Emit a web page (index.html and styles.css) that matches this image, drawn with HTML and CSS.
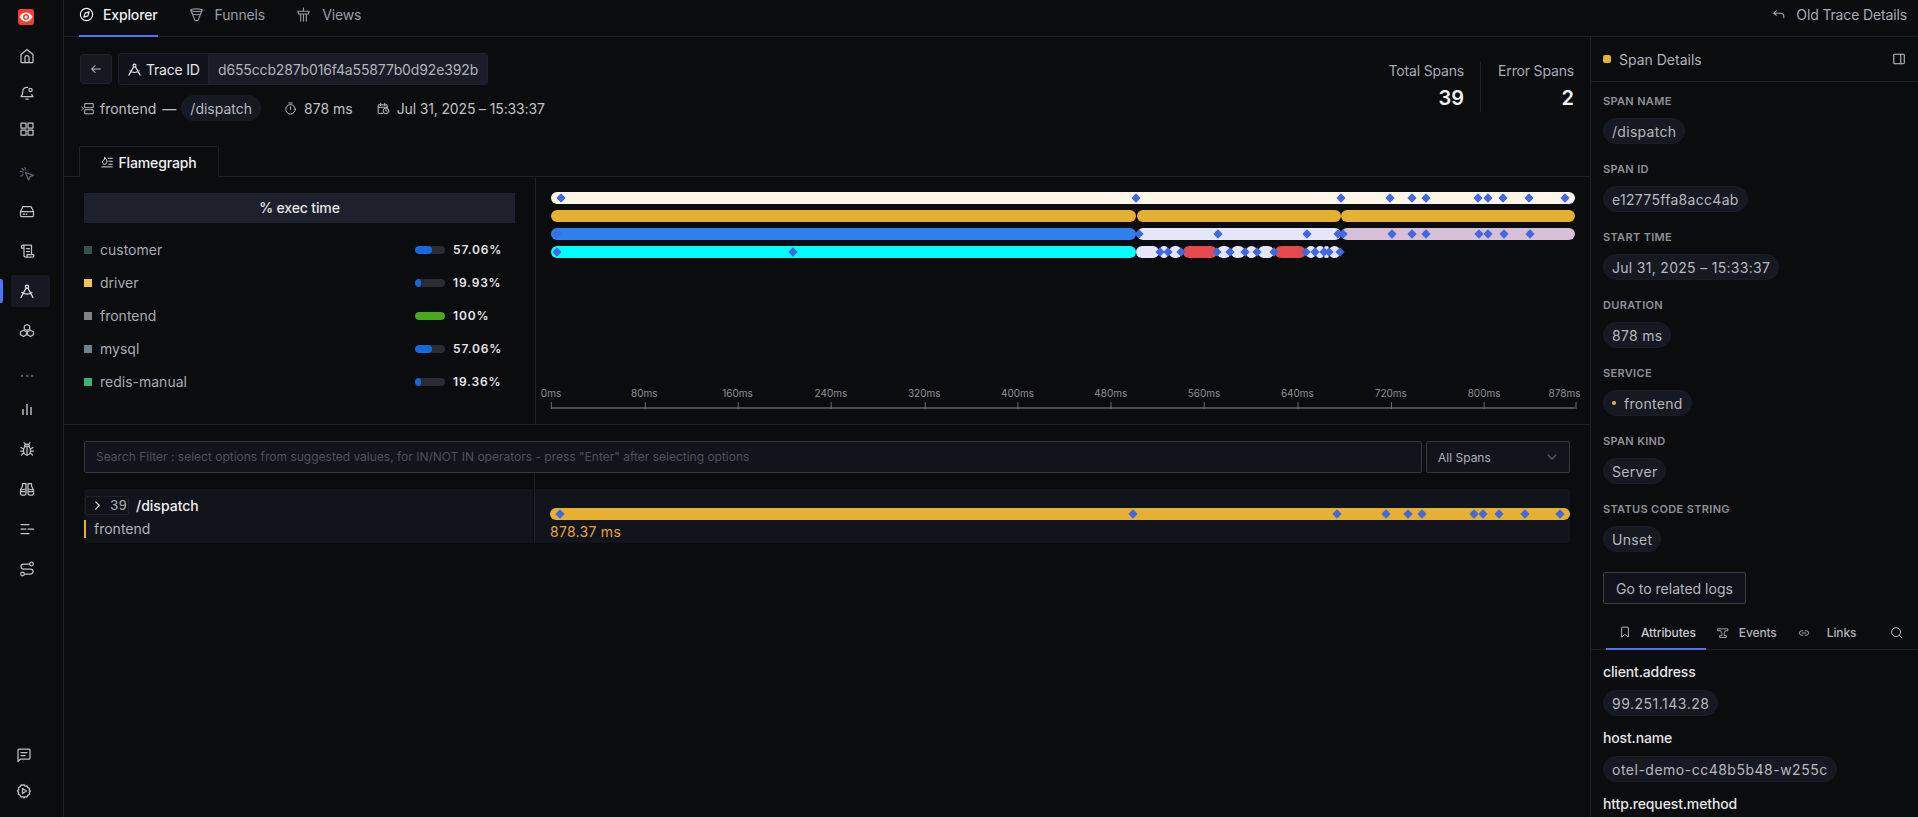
FILE: index.html
```html
<!DOCTYPE html>
<html lang="en">
<head>
    <meta charset="UTF-8">
    <title>Trace Details</title>
    <link rel="stylesheet" href="styles.css">
</head>
<body>
<svg class="defs" aria-hidden="true">
    <symbol id="d" viewBox=".3 .3 7.400 7.400" overflow="visible"><path d="M4 .6 7.400 4 4 7.400 .6 4Z" fill="#4169e1" stroke="#4169e1" stroke-width="1.300" stroke-linejoin="round"/></symbol>
</svg>
<div class="app">
    <!-- Sidebar -->
    <aside class="sidebar">
        <div class="logo"><svg width="16" height="16" viewBox="0 0 16 16"><path d="M1.500 8C3.500 4.800 5.600 3.600 8 3.600s4.500 1.200 6.500 4.400C12.500 11.200 10.400 12.400 8 12.400S3.500 11.200 1.500 8Z" fill="#fff" stroke="none"/><circle cx="8" cy="8" r="3" fill="#f0402e" stroke="none"/><circle cx="8" cy="8" r="1.500" fill="#fff" stroke="none"/></svg></div>
        <a class="side-item tight home"><svg viewBox="0 0 16 16"><path d="M2 14V6.500L8 1.500l6 5V14a.5.5 0 0 1-.5.500H2.500A.5.5 0 0 1 2 14Z"/><path d="M6 14.500V9.500a2 2 0 0 1 4 0v5"/></svg></a>
        <a class="side-item tight"><svg viewBox="0 0 16 16"><path d="M8.500 2.400A4 4 0 0 0 3.800 6.500c0 3.500-1.800 5-1.800 5h12s-.8-.7-1.300-2"/><path d="M6.800 14h2.400"/><circle cx="11.500" cy="5" r="1.700"/></svg></a>
        <a class="side-item tight"><svg viewBox="0 0 16 16"><rect x="2" y="2" width="5" height="5"/><rect x="9" y="2" width="5" height="5"/><rect x="2" y="9" width="5" height="5"/><rect x="9" y="9" width="5" height="5"/></svg></a>
        <a class="side-item dim cursor"><svg viewBox="0 0 16 16"><path d="M6.500 6.500l8 2.800-3.400 1.400-1.400 3.500Z"/><path d="M6 1.500 6.500 4M1.500 5.500 4 6M3 2.500l1.500 1.500M2 10l2-1.500"/></svg></a>
        <a class="side-item"><svg viewBox="0 0 16 16"><path d="M1.500 8.500v4a1 1 0 0 0 1 1h11a1 1 0 0 0 1-1v-4M1.500 8.500 4 3.500h8l2.500 5ZM1.500 8.500h13"/><path d="M4 11h1.500M7 11h1"/></svg></a>
        <a class="side-item"><svg viewBox="0 0 16 16"><path d="M4 2h8.500v9.500M4 2a1.500 1.500 0 0 0-1.500 1.500V5H5V3.500A1.500 1.500 0 0 0 4 2ZM5 4v8.500A1.500 1.500 0 0 0 6.500 14h7a1.500 1.500 0 0 0 1-2.500H8v1.500"/><path d="M7.500 5.500h3M7.500 8.500h3"/></svg></a>
        <a class="side-item active"><svg viewBox="0 0 16 16"><circle cx="8" cy="3.800" r="1.600"/><path d="M7 5.200 2 14.500M9 5.200l5 9.300M3 9.500c3 2 7 2 10 0"/></svg></a>
        <a class="side-item"><svg viewBox="0 0 16 16"><path d="M8 1.500l2.700 1.500v3L8 7.500 5.300 6V3Z"/><path d="M4.500 7.200 7.500 8.700v3L4.500 13.500 1.500 11.700v-3Z"/><path d="M11.500 7.200 14.500 8.700v3l-3 1.800-3-1.800v-3Z"/></svg></a>
        <div class="side-dots">•••</div>
        <a class="side-item small"><svg viewBox="0 0 16 16"><rect x="3" y="8" width="2" height="6" fill="currentColor" stroke="none"/><rect x="7" y="3" width="2" height="11" fill="currentColor" stroke="none"/><rect x="11" y="6" width="2" height="8" fill="currentColor" stroke="none"/></svg></a>
        <a class="side-item"><svg viewBox="0 0 16 16"><ellipse cx="8" cy="9.500" rx="3.500" ry="4.500"/><path d="M8 5v9M5.500 5.500a2.500 2.500 0 0 1 5 0M4.500 8 2 6.500M11.500 8 14 6.500M4.500 10H1.500M11.500 10h3M4.800 12 2.500 14M11.200 12l2.300 2M6 3 5 1.500M10 3l1-1.500"/></svg></a>
        <a class="side-item"><svg viewBox="0 0 16 16"><path d="M1.500 9 3.500 5V2.500H7v5.500M1.500 9v3.500A1.500 1.500 0 0 0 3 14h2.500A1.500 1.500 0 0 0 7 12.500V8ZM14.500 9 12.500 5V2.500H9v5.500M14.500 9v3.500A1.500 1.500 0 0 1 13 14h-2.500A1.500 1.500 0 0 1 9 12.500V8ZM1.500 10.500H7M9 10.500h5.500"/></svg></a>
        <a class="side-item"><svg viewBox="0 0 16 16"><path d="M2 3.500h8M2 8h5M9 8h5.500M2 12.500h8"/></svg></a>
        <a class="side-item"><svg viewBox="0 0 16 16"><circle cx="12.500" cy="3" r="1.800"/><circle cx="3.500" cy="13" r="1.800"/><path d="M10.700 3H4.500a2.500 2.500 0 0 0 0 5h7a2.500 2.500 0 0 1 0 5H5.300"/></svg></a>
        <div class="side-bottom">
            <a class="side-item"><svg viewBox="0 0 16 16"><path d="M2 14.500V3a1 1 0 0 1 1-1h10a1 1 0 0 1 1 1v8a1 1 0 0 1-1 1H4.500Z"/><path d="M5 5.500h6M5 8.500h4"/></svg></a>
            <a class="side-item"><svg viewBox="0 0 16 16"><path d="M8 1.500l1 1.700 2-.4.700 1.900 1.900.7-.4 2L14.500 8l-1.300 1.500.4 2-1.900.7-.7 1.900-2-.4-1 1.300-1-1.300-2 .4-.7-1.900-1.900-.7.4-2L1.500 8l1.300-1.500-.4-2 1.900-.7.7-1.900 2 .4Z"/><path d="M6.500 5.500v5L10.500 8Z"/></svg></a>
        </div>
    </aside>

    <div class="content">
        <!-- Top tabs -->
        <nav class="topbar">
            <a class="top-tab selected"><svg viewBox="0 0 16 16"><circle cx="8" cy="8" r="6.500"/><path d="M10.800 5.200 9.500 9.500 5.200 10.800 6.500 6.500Z"/></svg>Explorer</a>
            <a class="top-tab"><svg viewBox="0 0 16 16"><path d="M2 3.500c0-2 12-2 12 0L9.500 14.500h-3Z"/><path d="M2 3.500c0 1.800 12 1.800 12 0M3.500 7.500c2.500.8 6.500.8 9 0"/></svg>Funnels</a>
            <a class="top-tab"><svg viewBox="0 0 16 16"><path d="M2 4.500h12l-1 3H3ZM8 1v3.500M5 7.500V15M11 7.500V15M8 7.500V15"/></svg>Views</a>
            <a class="old-link"><svg viewBox="0 0 16 16"><path d="M5 3 2 6l3 2.500M2 6h7.500a4 4 0 0 1 4 4v1"/></svg>Old Trace Details</a>
        </nav>

        <div class="columns">
            <main class="main">
                <section class="trace-head">
                    <div>
                        <div class="trace-id-row">
                            <button class="back-btn"><svg viewBox="0 0 16 16"><path d="M13 8H3M7 4 3 8l4 4"/></svg></button>
                            <div class="trace-id">
                                <span class="trace-id-label"><svg viewBox="0 0 16 16"><circle cx="8" cy="3.800" r="1.600"/><path d="M7 5.200 2 14M9 5.200l5 8.800M3 9.500c3 2 7 2 10 0"/></svg>Trace ID</span>
                                <span class="trace-id-value">d655ccb287b016f4a55877b0d92e392b</span>
                            </div>
                        </div>
                        <div class="trace-meta">
                            <span class="meta-service"><svg viewBox="0 0 16 16"><rect x="5" y="2" width="10" height="5"/><rect x="5" y="9.500" width="10" height="5"/><path d="M.8 6l2 2-2 2"/></svg>frontend</span>
                            <span class="meta-dash">—</span>
                            <span class="pill meta-pill">/dispatch</span>
                            <span class="meta-item duration"><svg viewBox="0 0 16 16"><circle cx="8" cy="9" r="5.800"/><path d="M6 1.200h4M8 9V6"/></svg>878 ms</span>
                            <span class="meta-item date"><svg viewBox="0 0 16 16"><path d="M7 14H2.500a1 1 0 0 1-1-1V3.500h11V7M1.500 6.500h11M4.500 1.500v3M9.500 1.500v3"/><circle cx="11" cy="11" r="3.500"/><path d="M11 9.500V11h1.200"/></svg>Jul 31, 2025 – 15:33:37</span>
                        </div>
                    </div>
                    <div class="totals">
                        <div class="total-col first">
                            <div class="total-label">Total Spans</div>
                            <div class="total-value">39</div>
                        </div>
                        <div class="total-col">
                            <div class="total-label">Error Spans</div>
                            <div class="total-value">2</div>
                        </div>
                    </div>
                </section>

                <div class="tabs-line">
                    <a class="flame-tab"><svg viewBox="0 0 16 16"><path d="M1 14.500h14M9.500 3H15M10.500 7H15M10.500 11H15M5 2c.5 2 3 2.500 3 5.500 0 2-1.300 3.500-3 3.500s-3.500-1.500-3-3.500C2.300 6 3 6 3.500 6 4.500 5 5 3.500 5 2Z"/></svg>Flamegraph</a>
                </div>

                <section class="flame">
                    <div class="exec">
                        <div class="exec-title">% exec time</div>
                        <div class="exec-row"><i class="swatch sw-customer"></i><span class="exec-name">customer</span><span class="exec-bar"><b class="fill-blue" style="width:57.06%"></b></span><span class="exec-pct">57.06%</span></div>
                        <div class="exec-row"><i class="swatch sw-driver"></i><span class="exec-name">driver</span><span class="exec-bar"><b class="fill-blue" style="width:19.93%"></b></span><span class="exec-pct">19.93%</span></div>
                        <div class="exec-row"><i class="swatch sw-frontend"></i><span class="exec-name">frontend</span><span class="exec-bar"><b class="fill-green" style="width:100%"></b></span><span class="exec-pct">100%</span></div>
                        <div class="exec-row"><i class="swatch sw-mysql"></i><span class="exec-name">mysql</span><span class="exec-bar"><b class="fill-blue" style="width:57.06%"></b></span><span class="exec-pct">57.06%</span></div>
                        <div class="exec-row"><i class="swatch sw-redis"></i><span class="exec-name">redis-manual</span><span class="exec-bar"><b class="fill-blue" style="width:19.36%"></b></span><span class="exec-pct">19.36%</span></div>
                    </div>
                    <div class="chart">
                        <svg class="flame-svg" width="1050" height="72" viewBox="540 186 1050 72">
                            <g fill="#fdf5e6"><rect x="551" y="192" width="1024" height="12" rx="6"/></g>
                            <g fill="#e6b032">
                                <rect x="551" y="210" width="585" height="12" rx="6"/>
                                <rect x="1137" y="210" width="204" height="12" rx="6"/>
                                <rect x="1341" y="210" width="234" height="12" rx="6"/>
                            </g>
                            <rect x="551" y="228" width="585" height="12" rx="6" fill="#2f80ed"/>
                            <rect x="1137" y="228" width="204" height="12" rx="6" fill="#e6e6fa"/>
                            <rect x="1341" y="228" width="234" height="12" rx="6" fill="#d8bfd8"/>
                            <rect x="551" y="246" width="585" height="12" rx="6" fill="#00ffff"/>
                            <g fill="#e6e6fa">
                                <rect x="1136" y="246" width="23" height="12" rx="6"/>
                                <rect x="1160" y="246" width="8" height="12" rx="4"/>
                                <rect x="1169" y="246" width="13" height="12" rx="6"/>
                                <rect x="1217" y="246" width="14" height="12" rx="6"/>
                                <rect x="1231" y="246" width="14" height="12" rx="6"/>
                                <rect x="1246" y="246" width="11" height="12" rx="5.500"/>
                                <rect x="1258" y="246" width="16" height="12" rx="6"/>
                                <rect x="1306" y="246" width="10" height="12" rx="5"/>
                                <rect x="1316" y="246" width="8" height="12" rx="4"/>
                                <rect x="1324" y="246" width="5" height="12" rx="2.500"/>
                                <rect x="1329" y="246" width="11" height="12" rx="5.500"/>
                            </g>
                            <g fill="#e5484d">
                                <rect x="1183" y="246" width="34" height="12" rx="6"/>
                                <rect x="1275" y="246" width="30.500" height="12" rx="6"/>
                            </g>
                            <use href="#d" x="557" y="194" width="8" height="8"/>
                            <use href="#d" x="1132" y="194" width="8" height="8"/>
                            <use href="#d" x="1337" y="194" width="8" height="8"/>
                            <use href="#d" x="1386" y="194" width="8" height="8"/>
                            <use href="#d" x="1408" y="194" width="8" height="8"/>
                            <use href="#d" x="1422" y="194" width="8" height="8"/>
                            <use href="#d" x="1474" y="194" width="8" height="8"/>
                            <use href="#d" x="1484" y="194" width="8" height="8"/>
                            <use href="#d" x="1499" y="194" width="8" height="8"/>
                            <use href="#d" x="1525" y="194" width="8" height="8"/>
                            <use href="#d" x="1561" y="194" width="8" height="8"/>
                            <use href="#d" x="553" y="230" width="8" height="8" opacity=".75"/>
                            <use href="#d" x="1135" y="230" width="8" height="8"/>
                            <use href="#d" x="1214" y="230" width="8" height="8"/>
                            <use href="#d" x="1303" y="230" width="8" height="8"/>
                            <use href="#d" x="1334" y="230" width="8" height="8"/>
                            <use href="#d" x="1339" y="230" width="8" height="8"/>
                            <use href="#d" x="1388" y="230" width="8" height="8"/>
                            <use href="#d" x="1408" y="230" width="8" height="8"/>
                            <use href="#d" x="1422" y="230" width="8" height="8"/>
                            <use href="#d" x="1475" y="230" width="8" height="8"/>
                            <use href="#d" x="1484" y="230" width="8" height="8"/>
                            <use href="#d" x="1500" y="230" width="8" height="8"/>
                            <use href="#d" x="1526" y="230" width="8" height="8"/>
                            <use href="#d" x="553" y="248" width="8" height="8"/>
                            <use href="#d" x="789" y="248" width="8" height="8"/>
                            <use href="#d" x="1156" y="248" width="8" height="8"/>
                            <use href="#d" x="1164" y="248" width="8" height="8"/>
                            <use href="#d" x="1177" y="248" width="8" height="8"/>
                            <use href="#d" x="1213" y="248" width="8" height="8"/>
                            <use href="#d" x="1226" y="248" width="8" height="8"/>
                            <use href="#d" x="1241" y="248" width="8" height="8"/>
                            <use href="#d" x="1253" y="248" width="8" height="8"/>
                            <use href="#d" x="1270" y="248" width="8" height="8"/>
                            <use href="#d" x="1302" y="248" width="8" height="8"/>
                            <use href="#d" x="1311" y="248" width="8" height="8"/>
                            <use href="#d" x="1320" y="248" width="8" height="8"/>
                            <use href="#d" x="1325" y="248" width="8" height="8"/>
                            <use href="#d" x="1336" y="248" width="8" height="8"/>
                        </svg>
                        <div class="axis">
                            <span class="tick" style="left:0">0ms</span>
                            <span class="tick" style="left:9.11%">80ms</span>
                            <span class="tick" style="left:18.22%">160ms</span>
                            <span class="tick" style="left:27.34%">240ms</span>
                            <span class="tick" style="left:36.45%">320ms</span>
                            <span class="tick" style="left:45.56%">400ms</span>
                            <span class="tick" style="left:54.67%">480ms</span>
                            <span class="tick" style="left:63.78%">560ms</span>
                            <span class="tick" style="left:72.89%">640ms</span>
                            <span class="tick" style="left:82.01%">720ms</span>
                            <span class="tick" style="left:91.12%">800ms</span>
                            <span class="tick last" style="left:100%">878ms</span>
                        </div>
                    </div>
                </section>

                <section class="waterfall">
                    <div class="filter-row">
                        <div class="search-box">Search Filter : select options from suggested values, for IN/NOT IN operators - press "Enter" after selecting options</div>
                        <div class="select-box">All Spans<svg viewBox="0 0 12 12"><path d="M2 4l4 4 4-4"/></svg></div>
                    </div>
                    <div class="span-row">
                        <div class="span-left">
                            <div class="span-top">
                                <span class="span-count"><svg viewBox="0 0 12 12"><path d="M4 2l4 4-4 4"/></svg>39</span>
                                <span class="span-name">/dispatch</span>
                            </div>
                            <div class="span-service">frontend</div>
                        </div>
                        <div class="span-right">
                            <svg class="span-svg" width="1020" height="12" viewBox="550 0 1020 12">
                                <rect x="550" y="0" width="1020" height="12" rx="6" fill="#e6b032"/>
                                <use href="#d" x="556" y="2" width="8" height="8"/>
                                <use href="#d" x="1129" y="2" width="8" height="8"/>
                                <use href="#d" x="1333" y="2" width="8" height="8"/>
                                <use href="#d" x="1382" y="2" width="8" height="8"/>
                                <use href="#d" x="1404" y="2" width="8" height="8"/>
                                <use href="#d" x="1418" y="2" width="8" height="8"/>
                                <use href="#d" x="1470" y="2" width="8" height="8"/>
                                <use href="#d" x="1479" y="2" width="8" height="8"/>
                                <use href="#d" x="1495" y="2" width="8" height="8"/>
                                <use href="#d" x="1521" y="2" width="8" height="8"/>
                                <use href="#d" x="1556" y="2" width="8" height="8"/>
                            </svg>
                            <div class="span-time">878.37 ms</div>
                        </div>
                    </div>
                </section>
            </main>

            <!-- Span details -->
            <aside class="details">
                <header class="details-head">
                    <i class="details-dot"></i><span>Span Details</span>
                    <svg viewBox="0 0 16 16"><rect x="2" y="2.500" width="12" height="11" rx="1"/><path d="M10 2.500v11"/></svg>
                </header>
                <div class="details-body">
                    <div class="field"><div class="field-label">SPAN NAME</div><span class="pill">/dispatch</span></div>
                    <div class="field"><div class="field-label">SPAN ID</div><span class="pill">e12775ffa8acc4ab</span></div>
                    <div class="field"><div class="field-label">START TIME</div><span class="pill">Jul 31, 2025 – 15:33:37</span></div>
                    <div class="field"><div class="field-label">DURATION</div><span class="pill">878 ms</span></div>
                    <div class="field"><div class="field-label">SERVICE</div><span class="pill"><i class="pill-dot"></i>frontend</span></div>
                    <div class="field"><div class="field-label">SPAN KIND</div><span class="pill">Server</span></div>
                    <div class="field"><div class="field-label">STATUS CODE STRING</div><span class="pill">Unset</span></div>
                    <button class="logs-btn">Go to related logs</button>
                </div>
                <div class="attr-tabs">
                    <a class="attr-tab selected"><svg viewBox="0 0 16 16"><path d="M3.500 14.500V2.500a1 1 0 0 1 1-1h7a1 1 0 0 1 1 1v12L8 11.500Z"/></svg>Attributes</a>
                    <a class="attr-tab"><svg viewBox="0 0 16 16"><path d="M1.500 2.500h13v2.500H11l-1.500 4v2.500h3V14h-9v-2.500h3V9L5 5H1.500Z"/></svg>Events</a>
                    <a class="attr-tab links"><svg viewBox="0 0 16 16"><path d="M6.500 5H5a3 3 0 0 0 0 6h1.500M9.500 5H11a3 3 0 0 1 0 6H9.500M5.500 8h5"/></svg>Links</a>
                    <svg class="attr-search" viewBox="0 0 16 16"><circle cx="7.500" cy="7.500" r="5.500"/><path d="M11.500 11.500 14.500 14.500"/></svg>
                </div>
                <div class="attr-list">
                    <div class="attr-name">client.address</div>
                    <span class="pill">99.251.143.28</span>
                    <div class="attr-name">host.name</div>
                    <span class="pill">otel-demo-cc48b5b48-w255c</span>
                    <div class="attr-name">http.request.method</div>
                </div>
            </aside>
        </div>
    </div>
</div>
</body>
</html>
```

FILE: styles.css
```css
* {
    box-sizing: border-box;
}

html, body {
    height: 100%;
}

body {
    margin: 0;
    background-color: #0b0c0e;
    color: #c0c1c3;
    font-family: Inter, "Liberation Sans", sans-serif;
    font-size: 14px;
    overflow: hidden;
}

a { display: flex; align-items: center; }

svg {
    fill: none;
    stroke: currentColor;
    stroke-width: 1.2;
    stroke-linecap: round;
    stroke-linejoin: round;
    flex: none;
}

.defs { position: absolute; width: 0; height: 0; }

.app {
    display: flex;
    height: 817px;
    overflow: hidden;
}

/* Sidebar */
.sidebar {
    width: 64px;
    flex: none;
    border-right: 1px solid #1d212d;
    display: flex;
    flex-direction: column;
    align-items: flex-start;
    padding: 9px 0 0 11px;
    position: relative;
}

.logo {
    width: 16px;
    height: 16px;
    margin-left: 7px;
    background-color: #f0402e;
    border-radius: 3px;
}

.side-item {
    width: 39px;
    height: 32px;
    flex: none;
    margin-bottom: 8px;
    padding-left: 8px;
    border-radius: 3px;
    color: #c0c1c3;
}

.side-item svg { width: 16px; height: 16px; stroke-width: 1.25; }
.side-item.tight { margin-bottom: 4px; }
.side-item.home { margin-top: 15px; margin-bottom: 5px; }
.side-item.dim { color: #5f6478; }
.side-item.cursor { margin-top: 9px; margin-bottom: 5px; }
.side-item.small { color: #8a8d96; margin-top: 7px; }

.side-item.active {
    background-color: #161922;
    color: #e4e5e8;
    position: relative;
}

.side-item.active::before {
    content: "";
    position: absolute;
    left: -11px;
    top: 4px;
    width: 3px;
    height: 24px;
    background-color: #4e74f8;
    border-radius: 0 2px 2px 0;
}

.side-dots {
    width: 33px;
    height: 20px;
    margin-top: 11px;
    text-align: center;
    color: #5f6478;
    font-size: 7px;
    line-height: 20px;
    letter-spacing: 1px;
}

.side-bottom {
    margin-top: auto;
    margin-bottom: 6px;
}

.side-bottom .side-item { width: 26px; padding-left: 5px; margin-bottom: 4px; }

/* Top tabs */
.content {
    flex: 1;
    min-width: 0;
    display: flex;
    flex-direction: column;
}

.topbar {
    height: 37px;
    flex: none;
    display: flex;
    padding-left: 15px;
    padding-right: 11px;
    border-bottom: 1px solid #1d212d;
}

.top-tab {
    height: 37px;
    padding-bottom: 8px;
    margin-right: 31px;
    gap: 11px;
    color: #9a9ca3;
    font-size: 14px;
    letter-spacing: -.01em;
}

.top-tab svg { width: 15px; height: 15px; }

.top-tab.selected {
    color: #f0f1f3;
    font-weight: 500;
    gap: 9px;
    border-bottom: 2px solid #4e74f8;
    padding-bottom: 6px;
}

.old-link {
    margin-left: auto;
    height: 36px;
    padding-bottom: 7px;
    gap: 10px;
    color: #a8abb3;
    letter-spacing: -.01em;
}

.old-link svg { width: 14px; height: 14px; }

.columns {
    flex: 1;
    display: flex;
    min-height: 0;
}

.main {
    width: 1526px;
    flex: none;
    min-width: 0;
}

/* Trace header */
.trace-head {
    display: flex;
    justify-content: space-between;
    height: 109px;
    padding: 16px 16px 0 16px;
}

.trace-id-row {
    display: flex;
    gap: 6px;
    align-items: center;
}

.back-btn {
    width: 32px;
    height: 30px;
    padding: 0;
    display: flex;
    align-items: center;
    justify-content: center;
    background-color: #161922;
    border: 1px solid #1d212d;
    border-radius: 3px;
    color: #c0c1c3;
}

.back-btn svg { width: 14px; height: 14px; }

.trace-id {
    display: flex;
    height: 32px;
    border: 1px solid #1d212d;
    border-radius: 3px;
    overflow: hidden;
}

.trace-id-label {
    display: flex;
    align-items: center;
    gap: 4px;
    width: 90px;
    padding-left: 8px;
    color: #e4e5e8;
    background-color: #10121a;
    border-right: 1px solid #1d212d;
    white-space: nowrap;
    letter-spacing: -.015em;
}

.trace-id-label svg { width: 15px; height: 15px; }

.trace-id-value {
    display: flex;
    align-items: center;
    padding: 0 9px;
    background-color: #1a1d27;
    color: #b0b3ba;
    letter-spacing: -.01em;
}

.trace-meta {
    display: flex;
    align-items: center;
    margin-top: 10px;
    height: 26px;
    padding-left: 1px;
}

.trace-meta svg { width: 13px; height: 13px; }

.meta-service { display: flex; align-items: center; gap: 6px; }
.meta-dash { margin: 0 5px 0 6px; }
.meta-item { display: flex; align-items: center; gap: 7px; }
.duration { margin-left: 23px; }
.date { margin-left: 25px; margin-left: 24px; letter-spacing: -.01em; }
.meta-pill { padding: 0 7px; }

.pill {
    display: inline-flex;
    align-items: center;
    height: 26px;
    padding: 0 8px;
    border-radius: 13px;
    background-color: #161922;
    border: 1px solid #1a1d27;
    color: #b6b8bd;
    font-size: 14px;
    white-space: nowrap;
}

.totals {
    display: flex;
    padding-top: 9px;
    height: 60px;
}

.total-col {
    text-align: right;
    padding-left: 17px;
    height: 50px;
}

.total-col.first {
    padding-right: 16px;
    border-right: 1px solid #1d212d;
}

.total-label { font-size: 14px; color: #a8abb3; line-height: 18px; letter-spacing: -.012em; }
.total-value { font-size: 20px; font-weight: 600; color: #f0f1f3; line-height: 28px; margin-top: 4px; }

/* Flamegraph tab */
.tabs-line {
    height: 31px;
    padding-left: 15px;
    border-bottom: 1px solid #1d212d;
}

.flame-tab {
    width: 140px;
    height: 31px;
    justify-content: center;
    gap: 5px;
    color: #f0f1f3;
    font-weight: 500;
    font-size: 14px;
    letter-spacing: -.01em;
    background-color: #0b0c0e;
    border: 1px solid #1d212d;
    border-bottom: none;
    border-radius: 2px 2px 0 0;
}

.flame-tab svg { width: 12px; height: 12px; }

.flame {
    display: flex;
    height: 248px;
    border-bottom: 1px solid #1d212d;
}

.exec {
    width: 472px;
    flex: none;
    padding: 16px 20px 0 20px;
    border-right: 1px solid #1d212d;
}

.exec-title {
    height: 30px;
    line-height: 30px;
    text-align: center;
    color: #e4e5e8;
    font-weight: 500;
    letter-spacing: -.01em;
    background-color: #1d212d;
    margin-bottom: 10px;
}

.exec-row {
    display: flex;
    align-items: center;
    height: 33px;
}

.swatch { width: 8px; height: 8px; margin-right: 8px; flex: none; }
.sw-customer { background-color: #2f544f; }
.sw-driver { background-color: #f5c451; }
.sw-frontend { background-color: #808080; }
.sw-mysql { background-color: #708090; }
.sw-redis { background-color: #3cb371; }

.exec-name { flex: 1; color: #a8abb3; }

.exec-bar {
    width: 30px;
    height: 8px;
    border-radius: 4px;
    background-color: #292c33;
    overflow: hidden;
    margin-right: 8px;
    display: block;
}

.exec-bar b { display: block; height: 100%; border-radius: 4px; }
.fill-blue { background-color: #1668dc; }
.fill-green { background-color: #49aa19; }

.exec-pct {
    width: 62px;
    color: #e4e5e8;
    font-size: 12px;
    font-weight: 600;
    letter-spacing: .07em;
}

.chart {
    flex: 1;
    position: relative;
    padding: 9px 0 0 4px;
}

.flame-svg { display: block; stroke: none; }
.flame-svg rect { stroke: none; }

.axis {
    position: absolute;
    left: 15px;
    width: 1024px;
    top: 210px;
    height: 22px;
    border-bottom: 2px solid #4b4c50;
}

.tick {
    position: absolute;
    top: -1px;
    transform: translateX(-50%);
    font-size: 10px;
    color: #8f9197;
    line-height: 14px;
}

.tick::after {
    content: "";
    position: absolute;
    left: 50%;
    top: 16px;
    width: 1px;
    height: 7px;
    background-color: #6b6c70;
}

.tick.last { transform: translateX(-83%); }
.tick.last::after { left: 83%; }

/* Waterfall */
.waterfall { padding: 16px 20px 0 20px; }

.filter-row {
    display: flex;
    gap: 4px;
    margin-bottom: 16px;
}

.search-box {
    flex: 1;
    height: 32px;
    line-height: 30px;
    padding: 0 11px;
    font-size: 12px;
    color: #4e515a;
    background-color: #12141b;
    border: 1px solid #343742;
    border-radius: 2px;
    white-space: nowrap;
    overflow: hidden;
}

.select-box {
    width: 144px;
    height: 32px;
    display: flex;
    align-items: center;
    justify-content: space-between;
    padding: 0 11px;
    font-size: 12px;
    color: #b0b3ba;
    background-color: #12141b;
    border: 1px solid #343742;
    border-radius: 2px;
}

.select-box svg { width: 12px; height: 12px; color: #5a5d66; }

.span-row {
    display: flex;
    height: 54px;
    position: relative;
}

/* divider runs up past the row to the filter */
.span-row::before {
    content: "";
    position: absolute;
    left: 450px;
    top: -16px;
    bottom: 0;
    width: 1px;
    background-color: #1d212d;
}

.span-left {
    width: 449px;
    flex: none;
    background-color: #12141b;
    border-radius: 3px 0 0 3px;
    padding: 7px 0 0 1px;
}

.span-top { display: flex; align-items: center; gap: 7px; }

.span-count {
    display: flex;
    align-items: center;
    gap: 7px;
    width: 44px;
    height: 19px;
    padding-left: 6px;
    background-color: #10121a;
    border: 1px solid #1d212d;
    border-radius: 2px;
    color: #a8abb3;
    font-family: "Liberation Mono", monospace;
}

.span-count svg { width: 11px; height: 11px; color: #e4e5e8; }

.span-name { color: #f0f1f3; font-weight: 500; }

.span-service {
    margin: 5px 0 0 -1px;
    padding-left: 8px;
    height: 18px;
    line-height: 18px;
    border-left: 2px solid #e6b032;
    color: #b0b3ba;
}

.span-right {
    flex: 1;
    margin-left: 2px;
    background-color: #12141b;
    border-radius: 3px;
    padding: 19px 0 0 15px;
}

.span-svg { display: block; stroke: none; }
.span-svg rect { stroke: none; }

.span-time {
    color: #e9a23b;
    font-size: 14px;
    line-height: 18px;
    margin-top: 3px;
    letter-spacing: .02em;
}

/* Span details */
.details {
    flex: 1;
    border-left: 1px solid #1d212d;
    min-width: 0;
}

.details-head {
    height: 45px;
    display: flex;
    align-items: center;
    padding: 0 12px;
    border-bottom: 1px solid #1d212d;
    color: #b0b3ba;
}

.details-head svg { width: 14px; height: 14px; margin-left: auto; color: #c0c1c3; }

.details-dot {
    width: 8px;
    height: 8px;
    border-radius: 2px;
    background-color: #e6b032;
    margin-right: 8px;
}

.details-body { padding: 11px 12px 0; }

.field { height: 68px; }
.field .pill { letter-spacing: .3px; }

.field-label {
    font-size: 11px;
    font-weight: 600;
    color: #8f9197;
    letter-spacing: .03em;
    line-height: 16px;
    margin-bottom: 9px;
}

.pill-dot {
    width: 4px;
    height: 4px;
    border-radius: 50%;
    background-color: #f0b429;
    margin-right: 8px;
}

.logs-btn {
    display: block;
    height: 32px;
    padding: 0 12px;
    margin-top: 3px;
    background-color: #10121a;
    border: 1px solid #3a3d46;
    border-radius: 2px;
    color: #b6b8bd;
    font: 14px Inter, "Liberation Sans", sans-serif;
}

.attr-tabs {
    display: flex;
    align-items: flex-end;
    height: 46px;
    padding-left: 15px;
    border-bottom: 1px solid #1d212d;
    font-size: 12px;
}

.attr-tab {
    height: 33px;
    gap: 10px;
    margin-right: 21px;
    color: #b0b3ba;
    font-weight: 500;
    letter-spacing: -.01em;
}

.attr-tab svg { width: 12px; height: 12px; }
.attr-tab.links { gap: 17px; }

.attr-tab.selected {
    color: #c8cad0;
    height: 34px;
    padding: 0 10px 0 13px;
    margin-right: 11px;
    margin-bottom: -1px;
    border-bottom: 2px solid #4e74f8;
}

.attr-search { width: 13px; height: 13px; margin: 0 15px 10px auto; }

.attr-list { padding: 13px 12px 0; }

.attr-name {
    color: #e4e5e8;
    font-weight: 500;
    font-size: 14px;
    line-height: 18px;
    letter-spacing: -.01em;
    margin-bottom: 9px;
}

.attr-list .pill { display: flex; width: max-content; margin-bottom: 13px; letter-spacing: .5px; }
```
